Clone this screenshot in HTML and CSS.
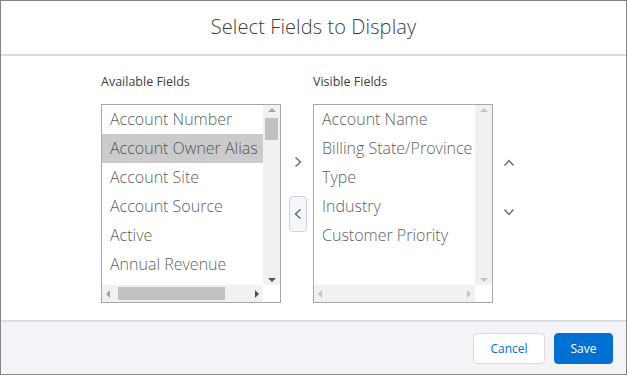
FILE: index.html
```html
<!DOCTYPE html>
<html>
<head>
<meta charset="utf-8">
<link rel="stylesheet" href="styles.css">
</head>
<body>
<div class="modal">
  <div class="header"><h2 class="title">Select Fields to Display</h2></div>
  <div class="body">
    <div class="col">
      <div class="label">Available Fields</div>
      <div class="listbox">
        <div class="lb-main">
          <ul class="items">
            <li>Account Number</li>
            <li class="selected">Account Owner Alias</li>
            <li>Account Site</li>
            <li>Account Source</li>
            <li>Active</li>
            <li>Annual Revenue</li>
          </ul>
          <div class="vscroll">
            <span class="tri up"></span>
            <div class="vtrack"><div class="vthumb"></div></div>
            <span class="tri down"></span>
          </div>
        </div>
        <div class="lb-bottom">
          <div class="hscroll">
            <span class="tri left"></span>
            <div class="htrack"><div class="hthumb"></div></div>
            <span class="tri right"></span>
          </div>
          <div class="corner"></div>
        </div>
      </div>
    </div>
    <div class="mid">
      <button class="arrow plain"><svg width="8" height="12" viewBox="0 0 8 12"><polyline points="1.5,1.5 6.5,6 1.5,10.5" fill="none" stroke="#6b6d70" stroke-width="1.5"/></svg></button>
      <button class="arrow boxed"><svg width="8" height="12" viewBox="0 0 8 12"><polyline points="6.5,1.5 1.5,6 6.5,10.5" fill="none" stroke="#5b6a80" stroke-width="1.5"/></svg></button>
    </div>
    <div class="col">
      <div class="label">Visible Fields</div>
      <div class="listbox">
        <div class="lb-main">
          <ul class="items">
            <li>Account Name</li>
            <li>Billing State/Province</li>
            <li>Type</li>
            <li>Industry</li>
            <li>Customer Priority</li>
          </ul>
          <div class="vscroll">
            <span class="tri up light"></span>
            <div class="vtrack"></div>
            <span class="tri down light"></span>
          </div>
        </div>
        <div class="lb-bottom">
          <div class="hscroll">
            <span class="tri left light"></span>
            <div class="htrack"></div>
            <span class="tri right light"></span>
          </div>
          <div class="corner"></div>
        </div>
      </div>
    </div>
    <div class="updown">
      <button class="arrow plain"><svg width="12" height="8" viewBox="0 0 12 8"><polyline points="1.5,6.5 6,1.5 10.5,6.5" fill="none" stroke="#6b6d70" stroke-width="1.5"/></svg></button>
      <button class="arrow plain"><svg width="12" height="8" viewBox="0 0 12 8"><polyline points="1.5,1.5 6,6.5 10.5,1.5" fill="none" stroke="#6b6d70" stroke-width="1.5"/></svg></button>
    </div>
  </div>
  <div class="footer">
    <button class="btn cancel">Cancel</button>
    <button class="btn save">Save</button>
  </div>
</div>
</body>
</html>
```
FILE: styles.css
```css
* { box-sizing: border-box; }
html, body { margin: 0; padding: 0; }
body {
  width: 627px;
  height: 375px;
  font-family: "Open Sans", "Noto Sans", sans-serif;
  background: #fff;
  overflow: hidden;
}
.modal {
  width: 627px;
  height: 375px;
  border: 1px solid #858585;
  display: flex;
  flex-direction: column;
  background: #fff;
}
.header {
  height: 55px;
  border-bottom: 2px solid #dcdcdc;
  display: flex;
  align-items: center;
  justify-content: center;
  flex: none;
  padding-bottom: 3px;
}
.title {
  margin: 0;
  font-size: 20px;
  font-weight: 300;
  color: #3e3e3c;
  letter-spacing: 0.1px;
}
.body {
  flex: 1;
  display: flex;
  padding: 18px 0 0 100px;
}
.col {
  width: 180px;
  display: flex;
  flex-direction: column;
}
.label {
  font-size: 12.5px;
  line-height: 16px;
  color: #3e3e3c;
  margin-bottom: 14px;
}
.listbox {
  width: 180px;
  height: 199px;
  border: 1px solid #a8a8a8;
  display: flex;
  flex-direction: column;
  background: #fff;
}
.lb-main {
  flex: 1;
  display: flex;
  min-height: 0;
}
.items {
  list-style: none;
  margin: 0;
  padding: 0;
  flex: 1;
  min-width: 0;
  overflow: hidden;
}
.items li {
  height: 29px;
  line-height: 28px;
  padding-left: 8px;
  font-size: 16px;
  font-weight: 300;
  color: #5f5f5f;
  white-space: nowrap;
  overflow: hidden;
}
.items li.selected {
  background: #cbcbcb;
  color: #555;
}
.vscroll {
  width: 17px;
  background: #f1f1f1;
  display: flex;
  flex-direction: column;
  align-items: center;
  padding: 3px 0;
}
.vtrack {
  flex: 1;
  width: 100%;
  padding: 6px 2px 0 2px;
}
.vthumb {
  height: 22px;
  background: #c1c1c1;
}
.lb-bottom {
  height: 17px;
  display: flex;
  flex: none;
}
.hscroll {
  flex: 1;
  background: #f1f1f1;
  display: flex;
  align-items: center;
  padding: 0 4px;
}
.htrack {
  flex: 1;
  height: 100%;
  padding: 2px 0 2px 8px;
}
.hthumb {
  width: 107px;
  height: 100%;
  background: #c1c1c1;
}
.corner {
  width: 17px;
  background: #fff;
}
.tri {
  width: 0;
  height: 0;
  flex: none;
}
.tri.up { border-left: 4px solid transparent; border-right: 4px solid transparent; border-bottom: 4px solid #a3a3a3; }
.tri.down { border-left: 4px solid transparent; border-right: 4px solid transparent; border-top: 4px solid #505050; }
.tri.left { border-top: 4px solid transparent; border-bottom: 4px solid transparent; border-right: 4px solid #a3a3a3; }
.tri.right { border-top: 4px solid transparent; border-bottom: 4px solid transparent; border-left: 4px solid #505050; }
.tri.up.light { border-bottom-color: #c4c4c4; }
.tri.down.light { border-top-color: #c4c4c4; }
.tri.left.light { border-right-color: #c4c4c4; }
.tri.right.light { border-left-color: #c4c4c4; }
.mid {
  width: 32px;
  display: flex;
  flex-direction: column;
  align-items: center;
  padding-top: 70px;
  padding-left: 2px;
  gap: 16px;
}
.updown {
  width: 32px;
  display: flex;
  flex-direction: column;
  align-items: center;
  padding-top: 71px;
  gap: 13px;
}
.arrow {
  width: 18px;
  height: 36px;
  padding: 0;
  margin: 0;
  border: 1px solid transparent;
  border-radius: 4px;
  background: transparent;
  display: flex;
  align-items: center;
  justify-content: center;
}
.arrow.boxed {
  border-color: #c9d3e0;
  background: #f4f6fa;
}
.footer {
  height: 54px;
  flex: none;
  border-top: 2px solid #dcdcdc;
  background: #f4f4f8;
  display: flex;
  align-items: center;
  justify-content: flex-end;
  gap: 9px;
  padding: 0 13px 0 0;
}
.btn {
  height: 31px;
  border-radius: 4px;
  font-family: "Open Sans", "Noto Sans", sans-serif;
  font-size: 12px;
  padding: 0;
  margin: 0;
}
.cancel {
  width: 72px;
  background: #fff;
  border: 1px solid #dddbda;
  color: #0070d2;
}
.save {
  width: 59px;
  background: #0070d2;
  border: 1px solid #0070d2;
  color: #fff;
}
```
